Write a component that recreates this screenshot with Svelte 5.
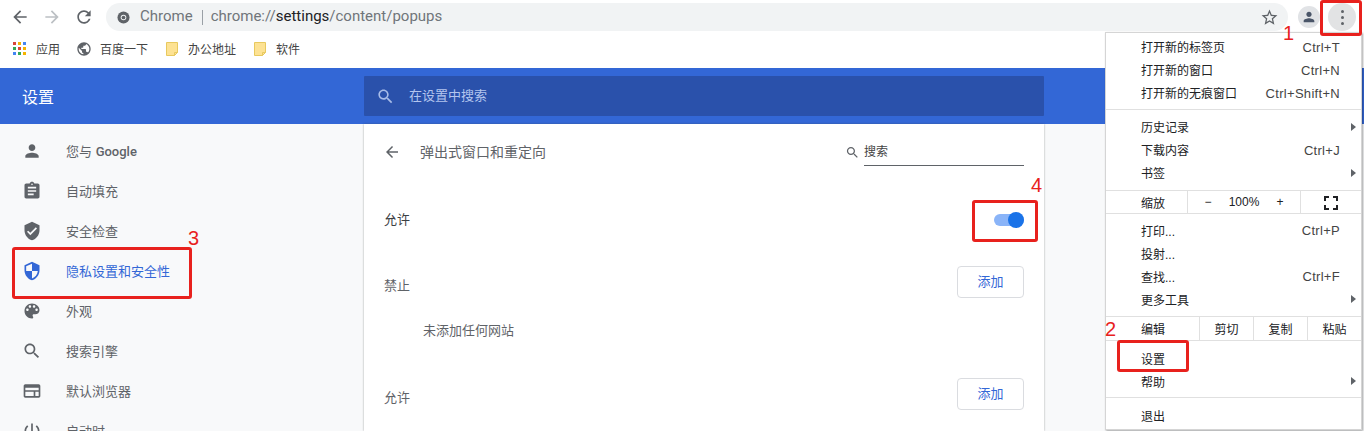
<script lang="ts">
  const icons: Record<string, string> = {
    person: 'M12 12c2.21 0 4-1.79 4-4s-1.79-4-4-4-4 1.79-4 4 1.79 4 4 4zm0 2c-2.67 0-8 1.34-8 4v2h16v-2c0-2.66-5.33-4-8-4z',
    assignment: 'M19 3h-4.18C14.4 1.84 13.3 1 12 1c-1.3 0-2.4.84-2.82 2H5c-1.1 0-2 .9-2 2v14c0 1.1.9 2 2 2h14c1.1 0 2-.9 2-2V5c0-1.1-.9-2-2-2zm-7 0c.55 0 1 .45 1 1s-.45 1-1 1-1-.45-1-1 .45-1 1-1zm2 14H7v-2h7v2zm3-4H7v-2h10v2zm0-4H7V7h10v2z',
    verified: 'M12 1L3 5v6c0 5.55 3.84 10.74 9 12 5.16-1.26 9-6.45 9-12V5l-9-4zm-2 16l-4-4 1.41-1.41L10 14.17l6.59-6.59L18 9l-8 8z',
    shield: 'M12 1L3 5v6c0 5.55 3.84 10.74 9 12 5.16-1.26 9-6.45 9-12V5l-9-4zm0 10.99h7c-.53 4.12-3.28 7.79-7 8.94V12H5V6.3l7-3.11v8.8z',
    palette: 'M12 3c-4.97 0-9 4.03-9 9s4.03 9 9 9c.83 0 1.5-.67 1.5-1.5 0-.39-.15-.74-.39-1.01-.23-.26-.38-.61-.38-.99 0-.83.67-1.5 1.5-1.5H16c2.76 0 5-2.24 5-5 0-4.42-4.03-8-9-8zm-5.5 9c-.83 0-1.5-.67-1.5-1.5S5.67 9 6.5 9 8 9.67 8 10.5 7.33 12 6.5 12zm3-4C8.67 8 8 7.33 8 6.5S8.67 5 9.5 5s1.5.67 1.5 1.5S10.33 8 9.5 8zm5 0c-.83 0-1.5-.67-1.5-1.5S13.67 5 14.5 5s1.5.67 1.5 1.5S15.33 8 14.5 8zm3 4c-.83 0-1.5-.67-1.5-1.5S16.67 9 17.5 9s1.5.67 1.5 1.5-.67 1.5-1.5 1.5z',
    search: 'M15.5 14h-.79l-.28-.27C15.41 12.59 16 11.11 16 9.5 16 5.91 13.09 3 9.5 3S3 5.91 3 9.5 5.91 16 9.5 16c1.61 0 3.09-.59 4.23-1.57l.27.28v.79l5 4.99L20.49 19l-4.99-5zm-6 0C7.01 14 5 11.99 5 9.5S7.01 5 9.5 5 14 7.01 14 9.5 11.99 14 9.5 14z',
    browser: 'M20 4H4c-1.1 0-2 .9-2 2v12c0 1.1.9 2 2 2h16c1.1 0 2-.9 2-2V6c0-1.1-.9-2-2-2zM4 18v-5h10v5H4zm16 0h-4v-5h4v5zm0-7H4V8h16v3z',
    power: 'M13 3h-2v10h2V3zm4.83 2.17l-1.42 1.42C17.99 7.86 19 9.81 19 12c0 3.87-3.13 7-7 7s-7-3.13-7-7c0-2.19 1.01-4.14 2.58-5.42L6.17 5.17C4.23 6.82 3 9.26 3 12c0 4.97 4.03 9 9 9s9-4.03 9-9c0-2.74-1.23-5.18-3.17-6.83z',
    back: 'M20 11H7.83l5.59-5.59L12 4l-8 8 8 8 1.41-1.41L7.83 13H20v-2z',
    forward: 'M12 4l-1.41 1.41L16.17 11H4v2h12.17l-5.58 5.59L12 20l8-8z',
    refresh: 'M17.65 6.35C16.2 4.9 14.21 4 12 4c-4.42 0-7.99 3.58-7.99 8s3.57 8 7.99 8c3.73 0 6.84-2.55 7.73-6h-2.08c-.82 2.33-3.04 4-5.65 4-3.31 0-6-2.69-6-6s2.69-6 6-6c1.66 0 3.14.69 4.22 1.78L13 11h7V4l-2.35 2.35z',
    star: 'M22 9.24l-7.19-.62L12 2 9.19 8.63 2 9.24l5.46 4.73L5.82 21 12 17.27 18.18 21l-1.63-7.03L22 9.24zM12 15.4l-3.76 2.27 1-4.28-3.32-2.88 4.38-.38L12 6.1l1.71 4.04 4.38.38-3.32 2.88 1 4.28L12 15.4z',
    globe: 'M12 2C6.48 2 2 6.48 2 12s4.48 10 10 10 10-4.48 10-10S17.52 2 12 2zm-1 17.93c-3.95-.49-7-3.85-7-7.93 0-.62.08-1.21.21-1.79L9 15v1c0 1.1.9 2 2 2v1.93zm6.9-2.54c-.26-.81-1-1.39-1.9-1.39h-1v-3c0-.55-.45-1-1-1H8v-2h2c.55 0 1-.45 1-1V7h2c1.1 0 2-.9 2-2v-.41c2.93 1.19 5 4.06 5 7.41 0 2.08-.8 3.97-2.1 5.39z',
  };

  const nav = [
    { icon: 'person', label: '您与 ', latin: 'Google' },
    { icon: 'assignment', label: '自动填充' },
    { icon: 'verified', label: '安全检查' },
    { icon: 'shield', label: '隐私设置和安全性', active: true },
    { icon: 'palette', label: '外观' },
    { icon: 'search', label: '搜索引擎' },
    { icon: 'browser', label: '默认浏览器' },
    { icon: 'power', label: '启动时' },
  ];

  const dots = ['#d9453a', '#f4b400', '#4285f4', '#34a853', '#d9453a', '#f4b400', '#4285f4', '#34a853', '#f4b400'];

  const menuTop = [
    [
      { label: '打开新的标签页', key: 'Ctrl+T' },
      { label: '打开新的窗口', key: 'Ctrl+N' },
      { label: '打开新的无痕窗口', key: 'Ctrl+Shift+N' },
    ],
    [
      { label: '历史记录', more: true },
      { label: '下载内容', key: 'Ctrl+J' },
      { label: '书签', more: true },
    ],
  ];
  const menuTools = [
    { label: '打印...', key: 'Ctrl+P' },
    { label: '投射...' },
    { label: '查找...', key: 'Ctrl+F' },
    { label: '更多工具', more: true },
  ];
  const menuHelp = [{ label: '设置' }, { label: '帮助', more: true }];
</script>

{#snippet icon(name: string, size: number, fill: string)}
  <svg width={size} height={size} viewBox="0 0 24 24" {fill}><path d={icons[name]} /></svg>
{/snippet}

{#snippet folder()}
  <svg width="12" height="14" viewBox="0 0 12 14">
    <path d="M.5.5h11v10l-3 3h-8z" fill="#fde293" stroke="#e8c95e" />
    <path d="M8.5 13.5v-3h3" fill="none" stroke="#e8c95e" />
  </svg>
{/snippet}

{#snippet row(item: { label: string; key?: string; more?: boolean })}
  <div class="menu-row">
    <span class="menu-label">{item.label}</span>
    {#if item.key}<span class="key">{item.key}</span>{/if}
    {#if item.more}<i class="more"></i>{/if}
  </div>
{/snippet}

<div class="page">
  <div class="toolbar">
    <span class="tool">{@render icon('back', 20, '#5f6368')}</span>
    <span class="tool">{@render icon('forward', 20, '#bcc0c4')}</span>
    <span class="tool">{@render icon('refresh', 20, '#5f6368')}</span>
    <div class="omnibox">
      <svg class="site" width="13" height="13" viewBox="0 0 14 14">
        <circle cx="7" cy="7" r="6.5" fill="#5f6368" />
        <circle cx="7" cy="7" r="3" fill="#f1f3f4" />
        <circle cx="7" cy="7" r="2" fill="#5f6368" />
      </svg>
      <span class="chip">Chrome</span>
      <span class="bar"></span>
      <span class="url">chrome://<b>settings</b>/content/popups</span>
      <span class="spacer"></span>
      {@render icon('star', 19, '#5f6368')}
    </div>
    <span class="avatar">{@render icon('person', 16, '#4a5568')}</span>
    <span class="dots"><i></i><i></i><i></i></span>
  </div>

  <div class="bookmarks">
    <span class="apps">
      {#each dots as color}<i style="background: {color}"></i>{/each}
    </span>
    <span class="mark apps-label">应用</span>
    <span class="globe">{@render icon('globe', 16, '#5f6368')}</span>
    <span class="mark">百度一下</span>
    <span class="folder">{@render folder()}</span>
    <span class="mark">办公地址</span>
    <span class="folder">{@render folder()}</span>
    <span class="mark">软件</span>
  </div>

  <header class="header">
    <div class="title">设置</div>
    <div class="searchbar">
      {@render icon('search', 19, '#a8bce8')}
      <span>在设置中搜索</span>
    </div>
  </header>

  <div class="body">
    <nav class="sidebar">
      {#each nav as item}
        <div class="nav-item" class:active={item.active}>
          {@render icon(item.icon, 20, item.active ? '#3367d6' : '#5f6368')}
          <span class="nav-label">{item.label}{#if item.latin}<b>{item.latin}</b>{/if}</span>
        </div>
      {/each}
    </nav>

    <main class="card">
      <div class="card-head">
        {@render icon('back', 18, '#5f6368')}
        <span class="card-title">弹出式窗口和重定向</span>
        <span class="spacer"></span>
        {@render icon('search', 15, '#5f6368')}
        <span class="field">搜索</span>
      </div>
      <div class="line toggle-line">
        <span>允许</span>
        <span class="toggle"><i></i></span>
      </div>
      <div class="line block-line">
        <span>禁止</span>
        <button class="add">添加</button>
      </div>
      <div class="empty">未添加任何网站</div>
      <div class="line allow-line">
        <span>允许</span>
        <button class="add">添加</button>
      </div>
    </main>
  </div>

  <aside class="menu">
    {#each menuTop as group}
      <section class="group">
        {#each group as item}{@render row(item)}{/each}
      </section>
    {/each}
    <div class="split zoom">
      <span class="split-label">缩放</span>
      <span class="zoom-controls"><span>−</span><span>100%</span><span>+</span></span>
      <span class="fullscreen"><svg width="14" height="14" viewBox="0 0 14 14" fill="none" stroke="#202124" stroke-width="2"><path d="M1 5V1h4M9 1h4v4M13 9v4H9M5 13H1V9" /></svg></span>
    </div>
    <section class="group tools">
      {#each menuTools as item}{@render row(item)}{/each}
    </section>
    <div class="split edit">
      <span class="split-label">编辑</span>
      <span class="cell">剪切</span>
      <span class="cell">复制</span>
      <span class="cell">粘贴</span>
    </div>
    <section class="group help">
      {#each menuHelp as item}{@render row(item)}{/each}
    </section>
    <section class="group quit">
      {@render row({ label: '退出' })}
    </section>
  </aside>

  <div class="mark-box box-1"></div>
  <div class="mark-box box-2"></div>
  <div class="mark-box box-3"></div>
  <div class="mark-box box-4"></div>
  <span class="num num-1">1</span>
  <span class="num num-2">2</span>
  <span class="num num-3">3</span>
  <span class="num num-4">4</span>
</div>

<style>
  :global(body) {
    margin: 0;
    background: #fff;
  }

  .page {
    position: relative;
    width: 1364px;
    height: 431px;
    overflow: hidden;
    display: flex;
    flex-direction: column;
    font-family: "Liberation Sans", "Noto Sans CJK SC", sans-serif;
    font-size: 13px;
    color: #3c4043;
  }

  .spacer {
    flex: 1;
  }

  svg {
    flex: none;
    display: block;
  }

  .toolbar {
    height: 33px;
    flex: none;
    display: flex;
    align-items: center;
    padding: 1px 2px 0 4px;
    box-sizing: border-box;
  }

  .tool {
    width: 32px;
    display: flex;
    justify-content: center;
  }

  .omnibox {
    margin-left: 6px;
    width: 1182px;
    height: 28px;
    border-radius: 14px;
    background: #f1f3f4;
    display: flex;
    align-items: center;
    padding: 0 9px 0 11px;
    box-sizing: border-box;
    font-family: Roboto, sans-serif;
    font-size: 15px;
    color: #70757a;
  }

  .chip {
    margin-left: 10px;
    margin-bottom: 2px;
  }

  .bar {
    width: 1px;
    height: 15px;
    background: #9aa0a6;
    margin: 0 8px 0 9px;
  }

  .url {
    margin-bottom: 2px;
  }

  .url b {
    font-weight: 400;
    color: #202124;
  }

  .avatar {
    width: 22px;
    height: 22px;
    margin-left: 10px;
    border-radius: 50%;
    background: #e1e3e6;
    display: flex;
    align-items: center;
    justify-content: center;
  }

  .dots {
    width: 28px;
    height: 28px;
    margin-left: 8px;
    border-radius: 50%;
    background: #e2e3e4;
    display: flex;
    flex-direction: column;
    align-items: center;
    justify-content: center;
    gap: 3px;
  }

  .dots i {
    width: 3px;
    height: 3px;
    border-radius: 50%;
    background: #5f6368;
  }

  .bookmarks {
    height: 35px;
    flex: none;
    display: flex;
    align-items: center;
    padding: 0 0 3px 13px;
    box-sizing: border-box;
    font-size: 12px;
    color: #444;
  }

  .apps {
    display: grid;
    grid-template-columns: repeat(3, 3px);
    gap: 2px;
    margin-bottom: 1px;
  }

  .apps i {
    width: 3px;
    height: 3px;
  }

  .globe {
    margin-left: 16px;
  }

  .mark {
    margin: 0 0 2px 8px;
  }

  .mark.apps-label {
    margin-left: 10px;
  }

  .folder {
    margin-left: 18px;
  }

  .folder + .mark {
    margin-left: 10px;
  }

  .header {
    height: 56px;
    flex: none;
    background: #3367d6;
    display: flex;
    align-items: center;
  }

  .title {
    width: 364px;
    padding-left: 22px;
    box-sizing: border-box;
    font-size: 16px;
    color: #fff;
  }

  .searchbar {
    width: 680px;
    height: 40px;
    background: #2a51ab;
    border-radius: 1px;
    display: flex;
    align-items: center;
    gap: 14px;
    padding-left: 12px;
    box-sizing: border-box;
    color: #b3c5ee;
  }

  .searchbar span {
    margin-bottom: 4px;
  }

  .body {
    flex: 1;
    display: flex;
    background: #f8f9fa;
    min-height: 0;
  }

  .sidebar {
    width: 364px;
    flex: none;
    padding-top: 7px;
    box-sizing: border-box;
  }

  .nav-item {
    height: 40px;
    display: flex;
    align-items: center;
    gap: 24px;
    padding-left: 22px;
    color: #5f6368;
  }

  .nav-item.active {
    color: #3367d6;
  }

  .nav-label {
    margin-bottom: 2px;
  }

  .nav-label b {
    font-family: Roboto, sans-serif;
    font-weight: 500;
  }

  .card {
    width: 680px;
    flex: none;
    background: #fff;
    box-shadow: 0 0 2px rgba(60, 64, 67, 0.45);
    padding: 0 20px;
    box-sizing: border-box;
  }

  .card-head {
    height: 56px;
    display: flex;
    align-items: center;
  }

  .card-head > svg:first-child {
    margin: 0 19px 0 -1px;
  }

  .card-title {
    color: #5f6368;
    font-size: 14px;
    margin-bottom: 2px;
  }

  .card-head > svg:nth-last-child(2) {
    margin-right: 4px;
  }

  .field {
    width: 160px;
    height: 26px;
    line-height: 26px;
    margin-top: 1px;
    border-bottom: 1px solid #5f6368;
    font-size: 12px;
    color: #444;
  }

  .line {
    display: flex;
    align-items: center;
    justify-content: space-between;
    color: #3c4043;
    height: 32px;
  }

  .toggle-line {
    margin-top: 23px;
  }

  .toggle-line > span:first-child {
    margin-bottom: 2px;
  }

  .block-line {
    margin-top: 31px;
  }

  .block-line span,
  .allow-line span {
    margin-top: 4px;
    color: #5f6368;
  }

  .empty {
    margin: 17px 0 0 39px;
    height: 32px;
    line-height: 32px;
    color: #5f6368;
  }

  .allow-line {
    margin-top: 31px;
  }

  .toggle {
    position: relative;
    width: 30px;
    height: 12px;
    margin-top: 2px;
    border-radius: 6px;
    background: #8ab4f8;
  }

  .toggle i {
    position: absolute;
    right: 0;
    top: -2px;
    width: 16px;
    height: 16px;
    border-radius: 50%;
    background: #1a73e8;
  }

  .add {
    width: 67px;
    height: 32px;
    padding: 0 0 3px;
    background: #fff;
    border: 1px solid #dadce0;
    border-radius: 4px;
    color: #3367d6;
    font: inherit;
  }

  .menu {
    position: absolute;
    left: 1105px;
    top: 32px;
    width: 257px;
    height: 398px;
    box-sizing: border-box;
    background: #fff;
    border: 1px solid #d5d5d5;
    box-shadow: 1px 1px 2px rgba(0, 0, 0, 0.35);
    font-size: 12px;
    color: #202124;
    padding-top: 3px;
  }

  .group {
    border-bottom: 1px solid #e0e0e0;
    padding-bottom: 4px;
    margin-bottom: 6px;
  }

  .group:nth-of-type(2) {
    border: 0;
    margin: 0;
    padding-bottom: 5px;
  }

  .group:nth-of-type(-n + 2) .menu-label {
    margin-bottom: 2px;
  }

  .menu-row {
    position: relative;
    height: 23px;
    display: flex;
    align-items: center;
    justify-content: space-between;
    padding: 0 21px 0 35px;
  }

  .key {
    color: #444;
    font-family: "Liberation Sans", sans-serif;
    font-size: 13px;
    letter-spacing: 0.3px;
  }

  .more {
    position: absolute;
    right: 5px;
    top: 7px;
    border-left: 5px solid #5f6368;
    border-top: 4px solid transparent;
    border-bottom: 4px solid transparent;
  }

  .split {
    height: 24px;
    display: flex;
    align-items: stretch;
    border-top: 1px solid #e0e0e0;
    border-bottom: 1px solid #e0e0e0;
    box-sizing: border-box;
    margin-bottom: 5px;
  }

  .split > span {
    display: flex;
    align-items: center;
  }

  .split-label {
    padding-left: 35px;
    width: 81px;
    box-sizing: border-box;
  }

  .zoom-controls {
    width: 114px;
    justify-content: space-around;
    border-left: 1px solid #e0e0e0;
    border-right: 1px solid #e0e0e0;
    padding: 0 8px;
    box-sizing: border-box;
  }

  .fullscreen {
    flex: 1;
    justify-content: center;
    padding-top: 1px;
  }

  .tools {
    border: 0;
    margin-bottom: 0;
    padding-bottom: 5px;
  }

  .edit {
    height: 25px;
    margin-bottom: 6px;
  }

  .edit .split-label {
    width: 95px;
    border-right: 1px solid #e0e0e0;
  }

  .cell {
    width: 54px;
    justify-content: center;
    border-right: 1px solid #e0e0e0;
  }

  .cell:last-child {
    border-right: 0;
  }

  .help {
    padding-bottom: 4px;
    margin-bottom: 6px;
  }

  .quit {
    border: 0;
    margin: 0;
  }

  .mark-box {
    position: absolute;
    box-sizing: border-box;
    border: 3px solid #e8211d;
    border-radius: 3px;
  }

  .box-1 {
    left: 1320px;
    top: 0;
    width: 42px;
    height: 36px;
  }

  .box-2 {
    left: 1117px;
    top: 340px;
    width: 72px;
    height: 32px;
  }

  .box-3 {
    left: 12px;
    top: 247px;
    width: 180px;
    height: 52px;
  }

  .box-4 {
    left: 972px;
    top: 200px;
    width: 66px;
    height: 42px;
  }

  .num {
    position: absolute;
    font-size: 20px;
    line-height: 20px;
    color: #e8211d;
    font-family: "Liberation Sans", sans-serif;
  }

  .num-1 {
    left: 1283px;
    top: 23px;
  }

  .num-2 {
    left: 1105px;
    top: 319px;
  }

  .num-3 {
    left: 188px;
    top: 228px;
  }

  .num-4 {
    left: 1031px;
    top: 175px;
  }
</style>
